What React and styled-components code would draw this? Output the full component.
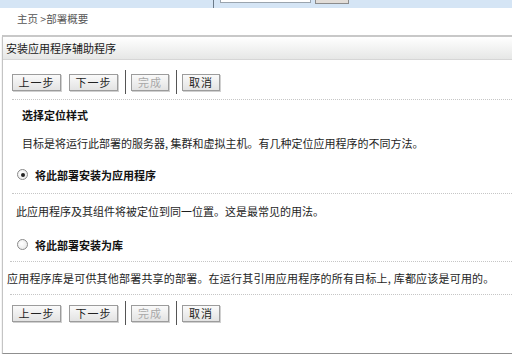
import styled, { createGlobalStyle } from "styled-components";

const GlobalStyle = createGlobalStyle`
  body {
    margin: 0;
    background: #fff;
    font-family: "Noto Sans CJK SC", "Liberation Sans", sans-serif;
    font-size: 11px;
    color: #222;
    overflow: hidden;
  }
`;

const TopBar = styled.div`
  height: 8px;
  background: #d5e5f5;
  display: flex;
  align-items: flex-start;
  padding-left: 213px;
`;

const TopSep = styled.div`
  width: 1px;
  height: 8px;
  background: #6b7a88;
`;

const SearchBox = styled.div`
  width: 89px;
  height: 2px;
  margin-left: 6px;
  background: #fff;
  border: 1px solid #9aa4ae;
  border-top: none;
`;

const SearchButton = styled.div`
  width: 32px;
  height: 3px;
  margin-left: 4px;
  background: #e2ddd8;
  border: 1px solid #8c8c8c;
  border-top: none;
`;

const Breadcrumb = styled.div`
  height: 27px;
  padding: 3px 0 0 17px;
  box-sizing: border-box;
  color: #555;
  font-size: 10.5px;
  line-height: 16px;
`;

const Panel = styled.div`
  margin-left: 2px;
  border-left: 1px solid #c4c4c4;
  border-bottom: 1px solid #8f8f8f;
  box-shadow: 0 2px 1px #bdbdbd;
  padding-bottom: 28px;
`;

const PanelHeader = styled.div`
  height: 22px;
  border-top: 2px solid #c8c8c8;
  border-bottom: 1px solid #d6d6d6;
  background: linear-gradient(#ffffff, #e6e7e6);
  padding-left: 3px;
  line-height: 22px;
  font-size: 11px;
  color: #1a1a1a;
`;

const ButtonBar = styled.div`
  display: flex;
  align-items: center;
  gap: 8px;
  padding-left: 9px;
  margin-top: ${(p) => p.$top}px;
  height: 24px;
`;

const Button = styled.div`
  width: ${(p) => p.$w}px;
  height: 17px;
  box-sizing: border-box;
  border: 1px solid #9c9c9c;
  box-shadow: 1px 1px 0 #d0d0d0;
  background: linear-gradient(#fafafa, #e3e3e3);
  display: flex;
  align-items: center;
  justify-content: center;
  font-size: 11px;
  color: ${(p) => (p.$disabled ? "#a8a8a8" : "#222")};
  letter-spacing: 1px;
`;

const BarSep = styled.div`
  width: 1px;
  height: 24px;
  background: #555;
  margin: 0 -3px 0 -1px;
`;

const Divider = styled.div`
  margin-left: ${(p) => p.$left}px;
  margin-top: ${(p) => p.$top || 0}px;
  border-top: 1px dotted #c6c6c6;
`;

const Row = styled.div`
  display: flex;
  align-items: center;
  gap: 7px;
  height: ${(p) => p.$h}px;
  padding-left: ${(p) => p.$left}px;
  font-weight: ${(p) => (p.$bold ? 700 : 400)};
  color: ${(p) => (p.$bold ? "#111" : "#1e1e1e")};
  letter-spacing: ${(p) => p.$spacing || 0}px;
  white-space: nowrap;
`;

const Radio = styled.span`
  width: 9px;
  height: 9px;
  border-radius: 50%;
  border: 1px solid #8a8a8a;
  background: radial-gradient(circle at 40% 40%, #fff, #e4e4e4);
  display: flex;
  align-items: center;
  justify-content: center;
  &::after {
    content: "";
    display: ${(p) => (p.$checked ? "block" : "none")};
    width: 4px;
    height: 4px;
    border-radius: 50%;
    background: #222;
  }
`;

function Buttons({ top }) {
  return (
    <ButtonBar $top={top}>
      <Button $w={49}>上一步</Button>
      <Button $w={49}>下一步</Button>
      <BarSep />
      <Button $w={38} $disabled>完成</Button>
      <BarSep />
      <Button $w={38}>取消</Button>
    </ButtonBar>
  );
}

export default function App() {
  return (
    <>
      <GlobalStyle />
      <TopBar>
        <TopSep />
        <SearchBox />
        <SearchButton />
      </TopBar>
      <Breadcrumb>主页 &gt;部署概要</Breadcrumb>
      <Panel>
        <PanelHeader>安装应用程序辅助程序</PanelHeader>
        <Buttons top={10} />
        <Divider $left={9} $top={5} />
        <Row $h={30} $left={19} $bold>选择定位样式</Row>
        <Row $h={26} $left={19}>
          目标是将运行此部署的服务器, 集群和虚拟主机。有几种定位应用程序的不同方法。
        </Row>
        <Row $h={37} $left={14} $bold>
          <Radio $checked />
          将此部署安装为应用程序
        </Row>
        <Divider $left={9} />
        <Row $h={34} $left={13}>
          此应用程序及其组件将被定位到同一位置。这是最常见的用法。
        </Row>
        <Row $h={33} $left={14} $bold>
          <Radio />
          将此部署安装为库
        </Row>
        <Divider $left={7} />
        <Row $h={32} $left={4} $spacing={0.2}>
          应用程序库是可供其他部署共享的部署。在运行其引用应用程序的所有目标上, 库都应该是可用的。
        </Row>
        <Divider $left={7} />
        <Buttons top={6} />
      </Panel>
    </>
  );
}
